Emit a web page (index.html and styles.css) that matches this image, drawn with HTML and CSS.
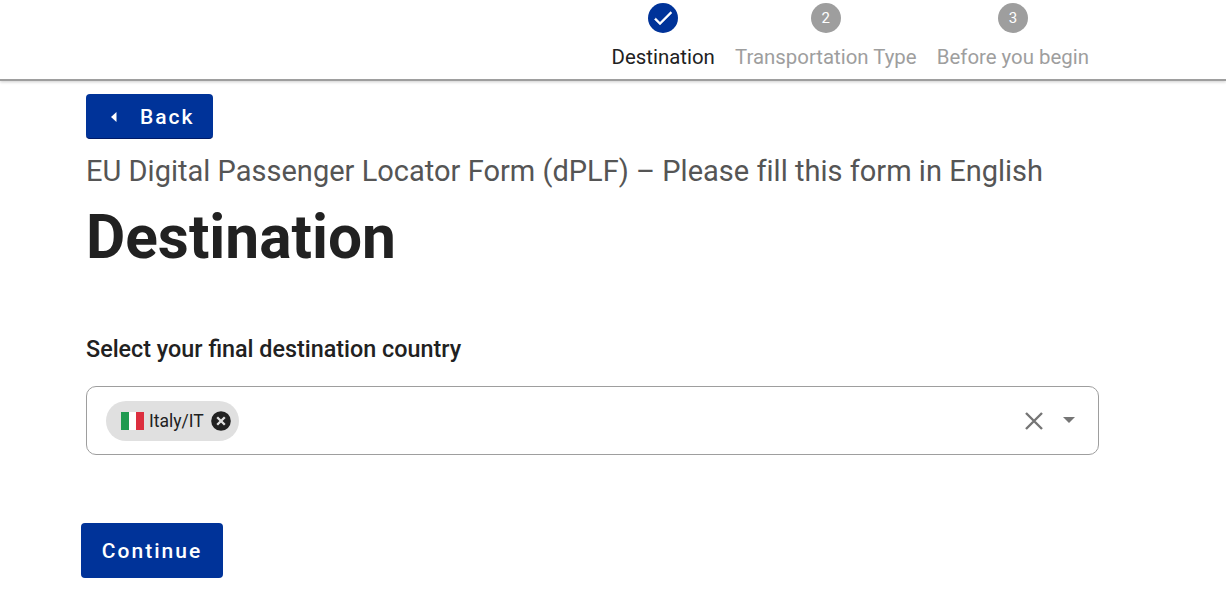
FILE: index.html
```html
<!DOCTYPE html>
<html lang="en">
<head>
  <meta charset="UTF-8">
  <meta name="viewport" content="width=device-width, initial-scale=1.0">
  <title>EU Digital Passenger Locator Form</title>
  <link rel="stylesheet" href="styles.css">
</head>
<body>
  <header class="topbar">
    <ol class="stepper">
      <li class="step step-done">
        <span class="step-dot">
          <svg width="24" height="24" viewBox="0 0 24 24"><path d="M9 16.2 4.8 12l-1.4 1.4L9 19 21 7l-1.4-1.4z" fill="#fff" stroke="#fff" stroke-width=".4"/></svg>
        </span>
        <span class="step-label">Destination</span>
      </li>
      <li class="step">
        <span class="step-dot">2</span>
        <span class="step-label">Transportation Type</span>
      </li>
      <li class="step">
        <span class="step-dot">3</span>
        <span class="step-label">Before you begin</span>
      </li>
    </ol>
  </header>

  <main class="content">
    <button class="btn btn-back" type="button">
      <svg width="8" height="12" viewBox="0 0 8 12"><path d="M6.5 1v10L1 6z" fill="#fff"/></svg>
      <span class="btn-text">Back</span>
    </button>
    <p class="subtitle">EU Digital Passenger Locator Form (dPLF) – Please fill this form in English</p>
    <h1>Destination</h1>

    <label class="field-label">Select your final destination country</label>
    <div class="select">
      <span class="chip">
        <span class="flag"><i class="flag-g"></i><i class="flag-w"></i><i class="flag-r"></i></span>
        <span class="chip-text">Italy/IT</span>
        <svg class="chip-x" width="20" height="20" viewBox="0 0 20 20">
          <circle cx="10" cy="10" r="9.8" fill="#212121"/>
          <path d="M6.2 6.2l7.6 7.6M13.8 6.2l-7.6 7.6" stroke="#e0e0e0" stroke-width="2.3" fill="none"/>
        </svg>
      </span>
      <span class="select-icons">
        <svg width="20" height="20" viewBox="0 0 20 20"><path d="M2 2l16 16M18 2L2 18" stroke="#757575" stroke-width="2.4" fill="none"/></svg>
        <svg width="14" height="7" viewBox="0 0 14 7"><path d="M1 0h12L7 6z" fill="#757575"/></svg>
      </span>
    </div>

    <button class="btn btn-continue" type="button">Continue</button>
  </main>
</body>
</html>
```

FILE: styles.css
```css
* {
  box-sizing: border-box;
}
body {
  margin: 0;
  background: #fff;
  color: #212121;
  font-family: Roboto, sans-serif;
}
.topbar {
  height: 81px;
  margin-bottom: -1px;
  border-bottom: 2px solid #9e9e9e;
  box-shadow: 0 1px 3px rgba(0,0,0,0.2);
  padding-top: 3px;
}
.stepper {
  list-style: none;
  margin: 0 0 0 611.6px;
  padding: 0;
  display: flex;
  gap: 20.2px;
}
.step {
  display: flex;
  flex-direction: column;
  align-items: center;
  gap: 12px;
  color: #9e9e9e;
}
.step-done {
  color: #212121;
}
.step-dot {
  width: 30px;
  height: 30px;
  border-radius: 50%;
  background: #9e9e9e;
  color: #fff;
  font-size: 15px;
  display: flex;
  align-items: center;
  justify-content: center;
}
.step-done .step-dot {
  background: #003399;
}
.step-label {
  font-size: 20.4px;
  line-height: 24px;
}
.content {
  padding: 14px 0 0 86px;
  width: 1099px;
}
.btn {
  display: flex;
  align-items: center;
  border: none;
  border-radius: 4px;
  background: #003399;
  color: #fff;
  font-family: Roboto, sans-serif;
  font-weight: 500;
  font-size: 21px;
  letter-spacing: 2px;
}
.btn-back {
  width: 127px;
  height: 45px;
  padding: 1px 0 0 24px;
  gap: 22px;
  border-bottom: 1px solid #001a66;
}
.subtitle {
  margin: 14px 0 0;
  font-size: 29px;
  letter-spacing: 0.015px;
  line-height: 36px;
  color: #555;
}
h1 {
  margin: 13px 0 0;
  font-size: 60.4px;
  line-height: 72px;
  font-weight: 700;
}
.field-label {
  display: block;
  margin-top: 61px;
  font-size: 23.35px;
  line-height: 28px;
  font-weight: 500;
}
.select {
  margin-top: 23px;
  height: 69px;
  border: 1px solid #9e9e9e;
  border-radius: 10px;
  display: flex;
  align-items: center;
  justify-content: space-between;
  padding: 0 22px 0 19px;
}
.chip {
  display: flex;
  align-items: center;
  height: 40px;
  border-radius: 20px;
  background: #e0e0e0;
  padding: 0 8px 0 15px;
}
.flag {
  display: flex;
  width: 23px;
  height: 18px;
}
.flag i {
  flex: 1;
}
.flag-g { background: #1f9a50; }
.flag-w { background: #fff; }
.flag-r { background: #dc2f3f; }
.chip-text {
  margin: 0 7px 0 5px;
  font-size: 17.5px;
}
.select-icons {
  display: flex;
  align-items: center;
  gap: 18px;
}
.btn-continue {
  margin: 68px 0 0 -5px;
  width: 142px;
  height: 55px;
  justify-content: center;
}
```
